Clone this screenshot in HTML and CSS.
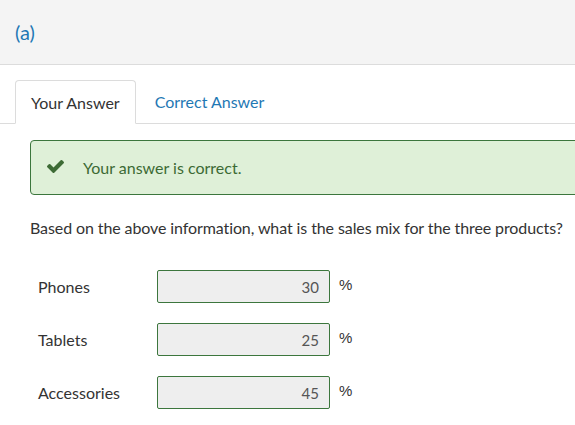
FILE: index.html
```html
<!DOCTYPE html>
<html>
<head>
<meta charset="utf-8">
<link rel="stylesheet" href="styles.css">
</head>
<body>
<div class="header"><span class="part">(a)</span></div>
<div class="tabs">
  <div class="tab active">Your Answer</div>
  <div class="tab link">Correct Answer</div>
</div>
<div class="alert">
  <svg class="check" viewBox="121 334 1550 1188" width="17" height="13"><path fill="#3d6b35" d="M1671 566q0 40-28 68l-724 724-136 136q-28 28-68 28t-68-28l-136-136-362-362q-28-28-28-68t28-68l136-136q28-28 68-28t68 28l294 295 656-657q28-28 68-28t68 28l136 136q28 28 28 68z"/></svg>
  <span>Your answer is correct.</span>
</div>
<p class="question">Based on the above information, what is the sales mix for the three products?</p>
<div class="rows">
  <div class="row"><span class="label">Phones</span><div class="field">30</div><span class="unit">%</span></div>
  <div class="row"><span class="label">Tablets</span><div class="field">25</div><span class="unit">%</span></div>
  <div class="row"><span class="label">Accessories</span><div class="field">45</div><span class="unit">%</span></div>
</div>
</body>
</html>
```
FILE: styles.css
```css
html, body {
  margin: 0;
  padding: 0;
  overflow: hidden;
  background: #fff;
}
body {
  font-family: Lato, "Open Sans", sans-serif;
  color: #333;
  width: 575px;
}
.header {
  height: 64px;
  background: #f4f4f4;
  border-bottom: 1px solid #dcdcdc;
  display: flex;
  align-items: center;
  padding-left: 15px;
}
.part {
  font-size: 20px;
  color: #1f78b4;
}
.tabs {
  margin-top: 15px;
  padding-left: 15px;
  display: flex;
  border-bottom: 1px solid #dcdcdc;
  height: 43px;
}
.tab {
  height: 43px;
  box-sizing: border-box;
  display: flex;
  align-items: center;
  font-size: 16px;
}
.tab.active {
  padding: 0 15px;
  border: 1px solid #dcdcdc;
  border-bottom-color: #fff;
  border-radius: 4px 4px 0 0;
  height: 44px;
  background: #fff;
  color: #333;
}
.tab.link {
  padding: 0 19px;
  color: #1f78b4;
}
.alert {
  margin: 16px 0 0 30px;
  width: 600px;
  height: 53px;
  background: #dff0d8;
  border: 1px solid #3c763d;
  border-radius: 4px;
  display: flex;
  align-items: center;
  padding-left: 16px;
  color: #3c6a34;
  font-size: 16px;
}
.check {
  margin-right: 19px;
  margin-top: -2px;
}
.question {
  margin: 23px 0 0 30px;
  font-size: 16px;
  line-height: 20px;
  letter-spacing: -0.1px;
}
.rows {
  margin-top: 32px;
  display: flex;
  flex-direction: column;
  gap: 20px;
  padding-left: 38px;
}
.row {
  display: flex;
  align-items: center;
  height: 33px;
}
.label {
  width: 119px;
  font-size: 16px;
}
.field {
  width: 173px;
  height: 33px;
  box-sizing: border-box;
  background: #eee;
  border: 1px solid #3c763d;
  border-radius: 2px;
  display: flex;
  align-items: center;
  justify-content: flex-end;
  padding-right: 10px;
  font-size: 15px;
  color: #555;
}
.unit {
  margin-left: 9px;
  margin-top: -4px;
  font-size: 15px;
  font-family: "Liberation Sans", Arial, sans-serif;
  color: #333;
}
```
